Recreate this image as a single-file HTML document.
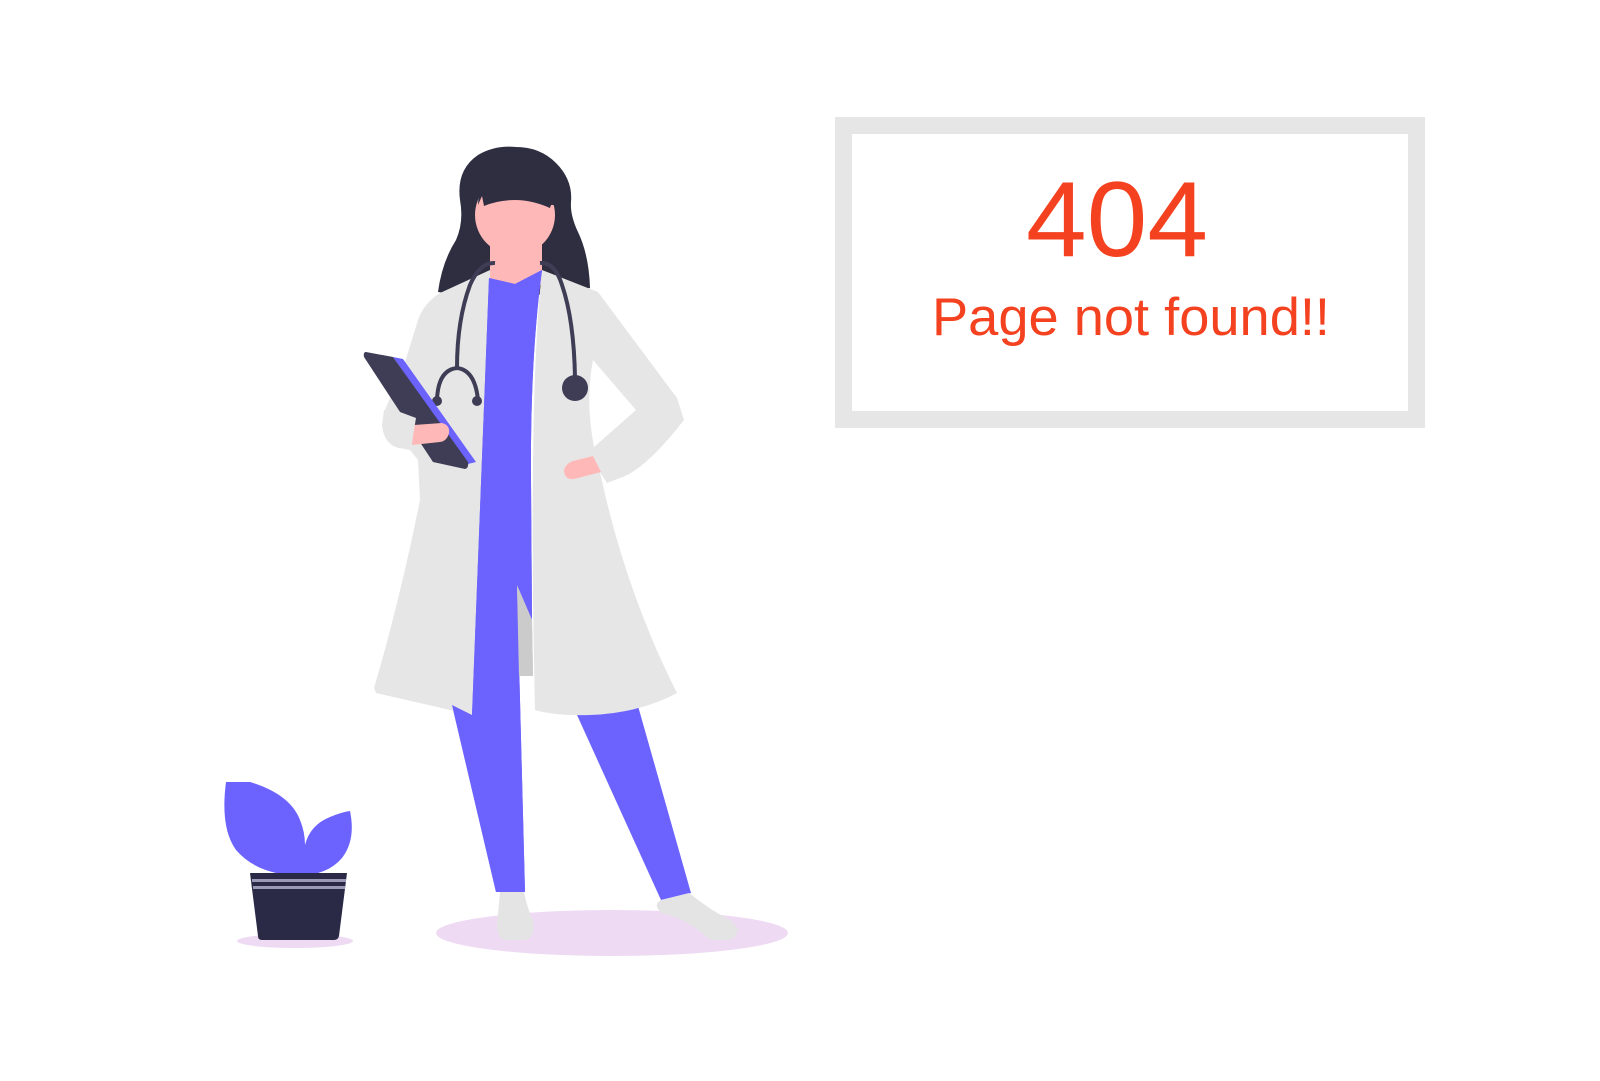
<!DOCTYPE html>
<html><head><meta charset="utf-8"><style>
html,body{margin:0;padding:0;background:#fff;width:1600px;height:1081px;overflow:hidden}
svg{display:block}
</style></head><body>
<svg width="1600" height="1081" viewBox="0 0 1600 1081" xmlns="http://www.w3.org/2000/svg">
<rect x="843.5" y="125.5" width="573" height="294" fill="none" stroke="#e6e6e6" stroke-width="17"/>
<text x="1117" y="256" text-anchor="middle" font-family="Liberation Sans, sans-serif" font-size="107" fill="#f4411f" textLength="182" lengthAdjust="spacingAndGlyphs">404</text>
<text x="932" y="335" font-family="Liberation Sans, sans-serif" font-size="53" fill="#f4411f" textLength="398" lengthAdjust="spacingAndGlyphs">Page not found!!</text>

<!-- shadows -->
<ellipse cx="612" cy="933" rx="176" ry="23" fill="#eedbf3"/>
<ellipse cx="295" cy="941" rx="58" ry="7" fill="#eedbf3"/>

<!-- plant -->
<path d="M226,782 L250,782 Q290,794 300,820 Q305,832 305,845 Q310,825 330,817 Q342,812 350,811 Q356,840 342,858 Q325,878 290,875 Q255,872 236,850 Q220,828 226,782Z" fill="#6c63ff"/>
<path d="M250,873 L347,873 L339,936 Q338,940 334,940 L262,940 Q258,940 258,936Z" fill="#2a2a47"/>
<rect x="252" y="879" width="94" height="3" fill="#9b98b8"/>
<rect x="253" y="886" width="92" height="3" fill="#9b98b8"/>

<!-- hair back -->
<path d="M438,292 Q442,262 456,240 Q464,222 460,200 Q456,170 478,155 Q495,145 516,147 Q540,147 556,163 Q573,180 571,202 Q570,215 578,232 Q589,255 590,288 L500,300Z" fill="#2f2e41"/>

<!-- legs -->
<path d="M452,705 L472,714 L517,585 L525,892 L496,892Z" fill="#6c63ff"/>
<path d="M577,715 L638,706 L691,893 L661,900Z" fill="#6c63ff"/>
<path d="M517,585 L532,620 L533,676 L519,676Z" fill="#cbcbcb"/>
<!-- shoes -->
<path d="M500,892 L524,892 Q527,908 533,920 Q536,938 525,940 L505,940 Q497,938 497,925Z" fill="#e4e4e4"/>
<path d="M661,900 L689,893 Q710,910 730,920 Q745,932 730,940 L710,940 Q690,920 662,913 Q652,905 661,900Z" fill="#e4e4e4"/>

<!-- neck / head -->
<rect x="490" y="235" width="52" height="50" fill="#ffb8b8"/>
<circle cx="515" cy="215" r="40" fill="#ffb8b8"/>
<path d="M478,205 Q478,180 515,170 Q552,175 556,205 L551,205 L550,208 Q532,200 515,200 Q498,200 484,206 L482,196Z" fill="#2f2e41"/>

<!-- coat -->
<path d="M490,270 L440,293 Q424,303 418,320 L405,362 L385,410 L382,425 Q385,447 410,450 L418,460 L420,500 Q400,600 374,688 L376,693 L472,715 L490,278Z" fill="#e6e6e6"/>
<path d="M542,270 L598,292 L677,398 L684,420 Q645,470 620,478 L607,483 L600,472 Q625,590 677,693 Q640,713 590,715 Q555,716 535,710 Q528,400 542,270Z" fill="#e6e6e6"/>
<path d="M593,360 L636,410 L594,447 Q585,400 593,360Z" fill="#fff"/>

<!-- scrubs top -->
<path d="M489,278 L515,284 L542,270 Q530,360 531,480 L532,620 L517,585 L525,892 L496,892 L452,705 L472,715Z" fill="#6c63ff"/>
<path d="M517,585 L532,620 L533,676 L519,676Z" fill="#cbcbcb"/>
<path d="M489,278 L515,284 L542,270 Q530,360 531,480 L532,618 L517,585 L472,715Z" fill="#6c63ff"/>

<!-- stethoscope -->
<path d="M495,263 Q480,262 470,285 Q457,320 457,368" fill="none" stroke="#3f3d56" stroke-width="4"/>
<path d="M540,263 Q555,262 562,285 Q574,320 575,378" fill="none" stroke="#3f3d56" stroke-width="4"/>
<path d="M437,400 Q438,370 457,368 Q475,370 478,400" fill="none" stroke="#3f3d56" stroke-width="4"/>
<circle cx="437" cy="401" r="5" fill="#3f3d56"/>
<circle cx="477" cy="401" r="5" fill="#3f3d56"/>
<circle cx="575" cy="388" r="13" fill="#3f3d56"/>

<!-- clipboard -->
<path d="M393,357 L403,359 L476,462 L468,464Z" fill="#6c63ff"/>
<path d="M366,352 L393,357 L468,462 Q469,468 465,469 L433,462 L402,415 L364,357 Q363,352 366,352Z" fill="#3f3d56"/>
<!-- hands -->
<path d="M414,425 L442,423 Q450,425 449,433 Q447,441 440,442 L412,445Z" fill="#ffb8b8"/>
<path d="M384,410 L400,412 L416,418 L411,448 Q385,452 382,425Z" fill="#e6e6e6"/>
<path d="M593,456 L601,472 L574,479 Q565,480 564,471 Q565,464 573,461Z" fill="#ffb8b8"/>
</svg>
</body></html>
